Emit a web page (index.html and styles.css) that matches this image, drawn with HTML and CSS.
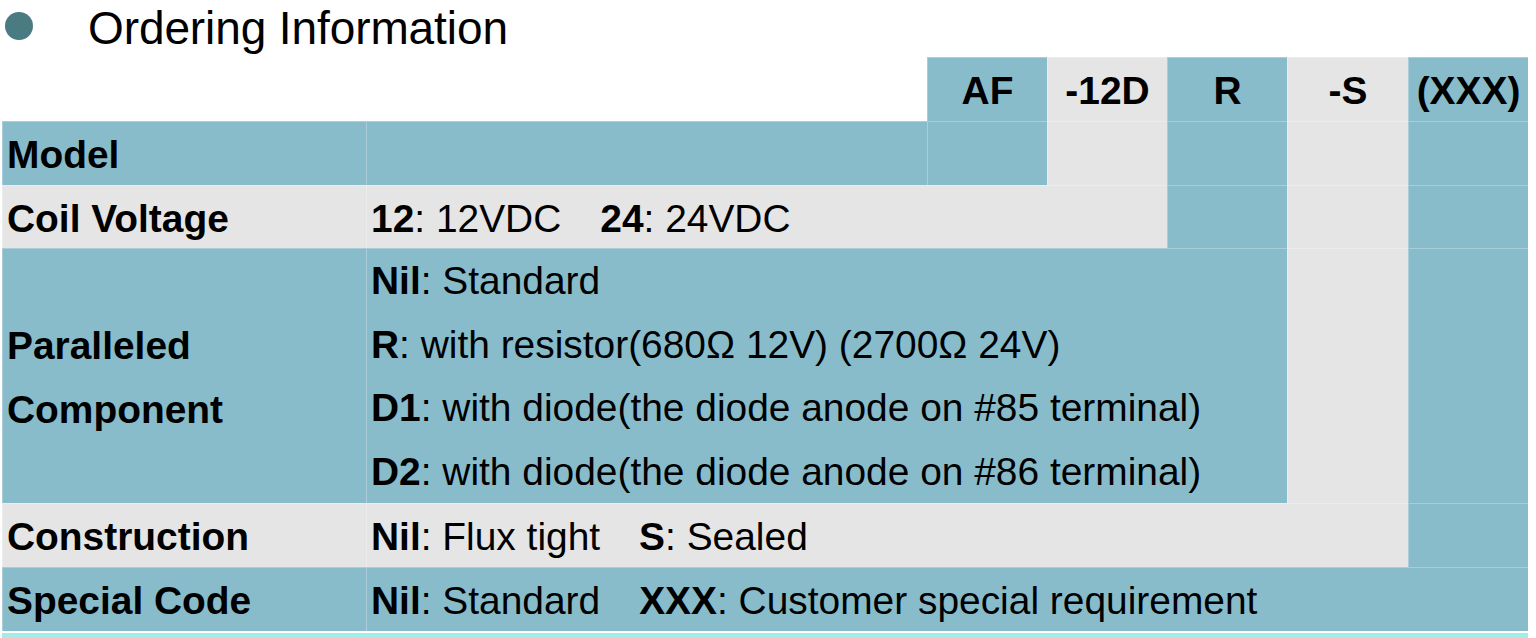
FILE: index.html
```html
<!DOCTYPE html>
<html>
<head>
<meta charset="utf-8">
<link rel="stylesheet" href="styles.css">
</head>
<body>
<div class="heading">
  <span class="bullet"></span>
  <h1 class="title">Ordering Information</h1>
</div>
<div class="table">
  <div class="cell blue code c3 r1">AF</div>
  <div class="cell gray code c4 r1">-12D</div>
  <div class="cell blue code c5 r1">R</div>
  <div class="cell gray code c6 r1">-S</div>
  <div class="cell blue code c7 r1">(XXX)</div>

  <div class="cell blue label c1 r2"><b>Model</b></div>
  <div class="cell blue c2 r2"></div>
  <div class="cell blue c3 r2"></div>
  <div class="cell gray c4 r2"></div>
  <div class="cell blue c5 r2"></div>
  <div class="cell gray c6 r2"></div>
  <div class="cell blue c7 r2"></div>

  <div class="cell gray label c1 r3"><b>Coil Voltage</b></div>
  <div class="cell gray text coil"><span><b>12</b>: 12VDC</span><span class="gap"><b>24</b>: 24VDC</span></div>
  <div class="cell blue c5 r3"></div>
  <div class="cell gray c6 r3"></div>
  <div class="cell blue c7 r3"></div>

  <div class="cell blue label para-label"><b>Paralleled<br>Component</b></div>
  <div class="cell blue text para">
    <div class="line"><b>Nil</b>: Standard</div>
    <div class="line"><b>R</b>: with resistor(680Ω 12V) (2700Ω 24V)</div>
    <div class="line"><b>D1</b>: with diode(the diode anode on #85 terminal)</div>
    <div class="line"><b>D2</b>: with diode(the diode anode on #86 terminal)</div>
  </div>
  <div class="cell gray para-s"></div>
  <div class="cell blue para-x"></div>

  <div class="cell gray label c1 r8"><b>Construction</b></div>
  <div class="cell gray text constr"><span><b>Nil</b>: Flux tight</span><span class="gap"><b>S</b>: Sealed</span></div>
  <div class="cell blue c7 r8"></div>

  <div class="cell blue label c1 r9"><b>Special Code</b></div>
  <div class="cell blue text special"><span><b>Nil</b>: Standard</span><span class="gap"><b>XXX</b>: Customer special requirement</span></div>
</div>
<div class="strip"></div>
</body>
</html>
```
FILE: styles.css
```css
html, body {
  margin: 0;
  padding: 0;
  background: #ffffff;
}
body {
  font-family: "Liberation Sans", Arial, sans-serif;
  color: #000;
  width: 1536px;
  height: 638px;
  overflow: hidden;
}
.heading {
  height: 57px;
  display: flex;
  align-items: flex-start;
}
.bullet {
  width: 28px;
  height: 28px;
  border-radius: 50%;
  background: #4b7b82;
  margin: 12px 0 0 5px;
  flex: none;
}
.title {
  margin: 0 0 0 55px;
  font-size: 46px;
  font-weight: normal;
  line-height: 57px;
  letter-spacing: -0.1px;
}
.table {
  margin-left: 2px;
  width: 1526px;
  display: grid;
  grid-template-columns: 364px 561px 120px 120px 120px 121px 120px;
  grid-template-rows: 64px 64px 63px 64px 64px 64px 63px 64px 64px;
  font-size: 38.9px;
}
.cell {
  box-sizing: border-box;
  border-left: 1px solid rgba(255, 255, 255, 0.28);
  border-top: 1px solid rgba(255, 255, 255, 0.28);
  line-height: 64px;
  padding-top: 1px;
  white-space: nowrap;
}
.blue { background: #88bccb; }
.gray { background: #e5e5e5; }
.code {
  text-align: center;
  font-weight: bold;
}
.label { padding-left: 4px; }
.text { padding-left: 4px; }
.gap { margin-left: 39px; }
.c1 { grid-column: 1; }
.c2 { grid-column: 2; }
.c3 { grid-column: 3; }
.c4 { grid-column: 4; }
.c5 { grid-column: 5; }
.c6 { grid-column: 6; }
.c7 { grid-column: 7; }
.r1 { grid-row: 1; }
.r2 { grid-row: 2; }
.r3 { grid-row: 3; }
.r8 { grid-row: 8; }
.r9 { grid-row: 9; }
.coil { grid-column: 2 / 5; grid-row: 3; }
.para-label {
  grid-column: 1;
  grid-row: 4 / 8;
  display: flex;
  align-items: center;
  padding-top: 4px;
}
.para {
  grid-column: 2 / 6;
  grid-row: 4 / 8;
  display: flex;
  flex-direction: column;
  padding-top: 0;
}
.para .line {
  flex: 1 1 0;
  min-height: 0;
  line-height: 64px;
}
.para-s { grid-column: 6; grid-row: 4 / 8; }
.para-x { grid-column: 7; grid-row: 4 / 8; }
.constr { grid-column: 2 / 7; grid-row: 8; }
.special { grid-column: 2 / 8; grid-row: 9; }
.strip {
  margin: 2px 0 0 2px;
  width: 1526px;
  height: 10px;
  background: #a0eee5;
}
```
